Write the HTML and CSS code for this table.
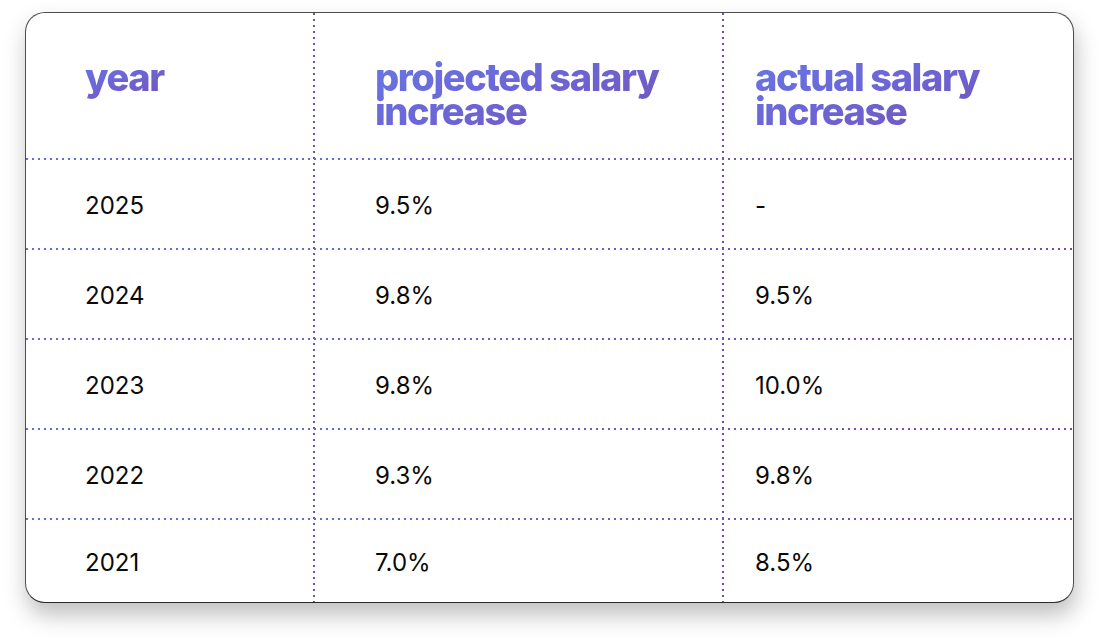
FILE: index.html
```html
<!DOCTYPE html>
<html lang="en">
<head>
<meta charset="utf-8">
<title>Salary increase</title>
<link rel="stylesheet" href="styles.css">
</head>
<body>
<div class="card">
  <div class="table">
    <div class="row head">
      <div class="cell c1"><span class="htext">year</span></div>
      <div class="cell c2"><span class="htext">projected salary<br>increase</span></div>
      <div class="cell c3"><span class="htext">actual salary<br>increase</span></div>
    </div>
    <div class="rule"></div>
    <div class="row">
      <div class="cell c1">2025</div>
      <div class="cell c2">9.5%</div>
      <div class="cell c3">-</div>
    </div>
    <div class="rule"></div>
    <div class="row">
      <div class="cell c1">2024</div>
      <div class="cell c2">9.8%</div>
      <div class="cell c3">9.5%</div>
    </div>
    <div class="rule"></div>
    <div class="row">
      <div class="cell c1">2023</div>
      <div class="cell c2">9.8%</div>
      <div class="cell c3">10.0%</div>
    </div>
    <div class="rule"></div>
    <div class="row">
      <div class="cell c1">2022</div>
      <div class="cell c2">9.3%</div>
      <div class="cell c3">9.8%</div>
    </div>
    <div class="rule"></div>
    <div class="row last">
      <div class="cell c1">2021</div>
      <div class="cell c2">7.0%</div>
      <div class="cell c3">8.5%</div>
    </div>
  </div>
</div>
</body>
</html>
```

FILE: styles.css
```css
html, body {
  margin: 0;
  padding: 0;
  background: #ffffff;
}

body {
  font-family: Inter, "Liberation Sans", sans-serif;
  color: #0a0a0a;
  padding: 12px 0 0 25px;
  min-height: 642px;
  box-sizing: border-box;
}

.card {
  width: 1047px;
  height: 589px;
  border: 1px solid #4d4d4d;
  border-bottom-color: #2a2a2a;
  border-radius: 20px;
  background: #ffffff;
  box-shadow: 2px 12px 22px rgba(0, 0, 0, 0.25);
  overflow: hidden;
}

.table {
  height: 100%;
  display: flex;
  flex-direction: column;
  background-image:
    linear-gradient(to bottom, #734cb4 2px, transparent 2px),
    linear-gradient(to bottom, #734cb4 2px, transparent 2px);
  background-size: 2px 6px, 2px 6px;
  background-position: 287px 0, 696px 0;
  background-repeat: repeat-y, repeat-y;
}

.row {
  display: grid;
  grid-template-columns: 287px 409px 351px;
  height: 88px;
  align-items: center;
}

.row.head {
  height: 145px;
  align-items: start;
}

.row.last {
  height: 82px;
}

.rule {
  height: 2px;
  flex: none;
  background: linear-gradient(to right, #646ddf 0%, #6868d6 35%, #7155bb 70%, #764cb0 100%);
  -webkit-mask-image: linear-gradient(to right, #000 2px, transparent 2px);
  mask-image: linear-gradient(to right, #000 2px, transparent 2px);
  -webkit-mask-size: 6px 2px;
  mask-size: 6px 2px;
  -webkit-mask-repeat: repeat-x;
  mask-repeat: repeat-x;
}

.cell {
  font-size: 24px;
  line-height: 30px;
  padding-top: 4px;
}

.c1 { padding-left: 59px; }
.c2 { padding-left: 62px; }
.c3 { padding-left: 33px; }

.head .cell {
  padding-top: 42px;
  font-size: 38px;
  font-weight: 800;
  line-height: 34px;
  letter-spacing: -1.4px;
}

.htext {
  display: inline-block;
  padding: 5px 2px 9px 0;
  background: linear-gradient(160deg, #6877e4 0%, #6c66d6 45%, #7352b6 100%);
  -webkit-background-clip: text;
  background-clip: text;
  color: transparent;
}
```
